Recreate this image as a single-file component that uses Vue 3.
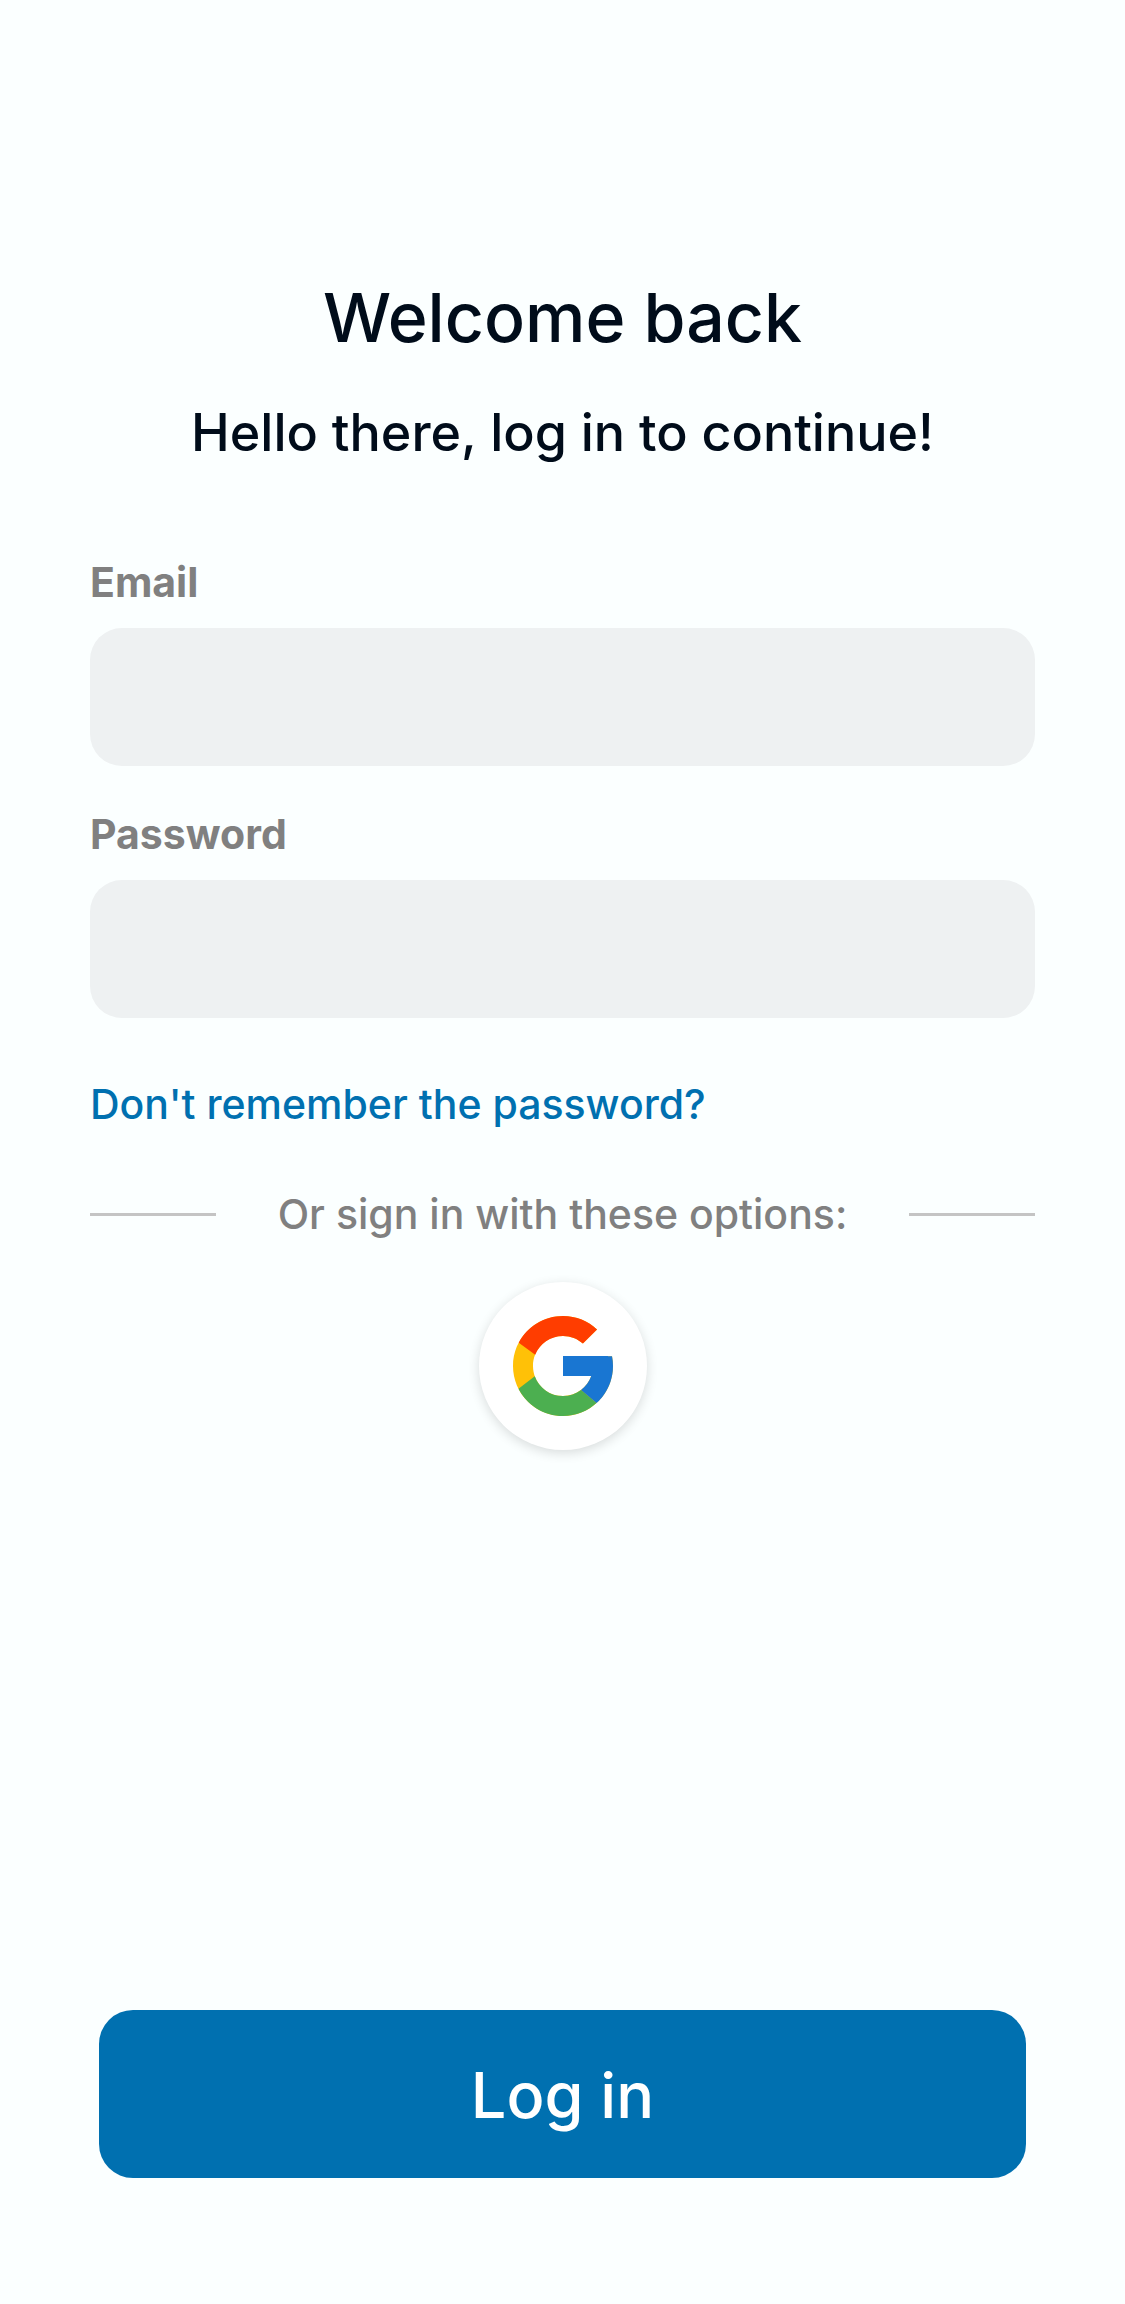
<script setup>
import { ref } from 'vue'

const email = ref('')
const password = ref('')
</script>

<template>
  <main class="screen">
    <header class="intro">
      <h1 class="title">Welcome back</h1>
      <p class="subtitle">Hello there, log in to continue!</p>
    </header>

    <form id="login-form" class="form" @submit.prevent>
      <div class="field">
        <label class="label" for="email">Email</label>
        <input id="email" v-model="email" class="input" type="email" autocomplete="email" />
      </div>
      <div class="field">
        <label class="label" for="password">Password</label>
        <input id="password" v-model="password" class="input" type="password" autocomplete="current-password" />
      </div>
    </form>

    <a class="forgot" href="#">Don't remember the password?</a>

    <div class="divider">
      <span class="rule"></span>
      <span class="divider-text">Or sign in with these options:</span>
      <span class="rule"></span>
    </div>

    <button class="google" type="button" aria-label="Sign in with Google">
      <svg class="google-icon" viewBox="0 0 48 48" aria-hidden="true">
        <path fill="#FFC107" d="M43.611,20.083H42V20H24v8h11.303c-1.649,4.657-6.08,8-11.303,8c-6.627,0-12-5.373-12-12c0-6.627,5.373-12,12-12c3.059,0,5.842,1.154,7.961,3.039l5.657-5.657C34.046,6.053,29.268,4,24,4C12.955,4,4,12.955,4,24c0,11.045,8.955,20,20,20c11.045,0,20-8.955,20-20C44,22.659,43.862,21.35,43.611,20.083z" />
        <path fill="#FF3D00" d="M6.306,14.691l6.571,4.819C14.655,15.108,18.961,12,24,12c3.059,0,5.842,1.154,7.961,3.039l5.657-5.657C34.046,6.053,29.268,4,24,4C16.318,4,9.656,8.337,6.306,14.691z" />
        <path fill="#4CAF50" d="M24,44c5.166,0,9.86-1.977,13.409-5.192l-6.19-5.238C29.211,35.091,26.715,36,24,36c-5.202,0-9.619-3.317-11.283-7.946l-6.522,5.025C9.505,39.556,16.227,44,24,44z" />
        <path fill="#1976D2" d="M43.611,20.083H42V20H24v8h11.303c-0.792,2.237-2.231,4.166-4.087,5.571c0.001-0.001,0.002-0.001,0.003-0.002l6.19,5.238C36.971,39.205,44,34,44,24C44,22.659,43.862,21.35,43.611,20.083z" />
      </svg>
    </button>

    <button class="submit" type="submit" form="login-form">Log in</button>
  </main>
</template>

<style>
body {
  background: #fbffff;
}
</style>

<style scoped>
.screen {
  box-sizing: border-box;
  min-height: 100vh;
  padding: 277px 90px 126px;
  display: flex;
  flex-direction: column;
  background: #fbffff;
  font-family: Inter, "Liberation Sans", sans-serif;
  font-weight: 500;
}

.intro {
  display: flex;
  flex-direction: column;
  gap: 46px;
  text-align: center;
  color: #000c1a;
}

.title {
  margin: 0;
  font-size: 68px;
  line-height: 80px;
  font-weight: 500;
}

.subtitle {
  margin: 0;
  font-size: 52px;
  line-height: 60px;
}

.form {
  margin-top: 95px;
  display: flex;
  flex-direction: column;
  gap: 44px;
}

.field {
  display: flex;
  flex-direction: column;
  gap: 22px;
}

.label {
  font-size: 41px;
  line-height: 48px;
  font-weight: 700;
  color: #808080;
}

.input {
  box-sizing: border-box;
  width: 100%;
  height: 138px;
  padding: 0 36px;
  border: 0;
  border-radius: 32px;
  background: #eef1f2;
  color: #000c1a;
  font: inherit;
  font-size: 41px;
}

.forgot {
  align-self: flex-start;
  margin-top: 62px;
  font-size: 41px;
  line-height: 48px;
  color: #0070b0;
  text-decoration: none;
}

.divider {
  margin-top: 63px;
  display: flex;
  align-items: center;
  justify-content: space-between;
}

.rule {
  width: 126px;
  height: 3px;
  background: #c4c4c4;
}

.divider-text {
  font-size: 41px;
  line-height: 47px;
  color: #808080;
}

.google {
  align-self: center;
  margin-top: 44px;
  width: 168px;
  height: 168px;
  padding: 0;
  border: 0;
  border-radius: 50%;
  display: flex;
  align-items: center;
  justify-content: center;
  background: #fff;
  box-shadow: 0 3px 12px rgba(0, 0, 0, 0.14);
  cursor: pointer;
}

.google-icon {
  width: 120px;
  height: 120px;
}

.submit {
  margin: auto 9px 0;
  height: 168px;
  padding: 2px 0 0;
  border: 0;
  border-radius: 34px;
  background: #0070b0;
  color: #fff;
  font: inherit;
  font-size: 63px;
  cursor: pointer;
}
</style>
